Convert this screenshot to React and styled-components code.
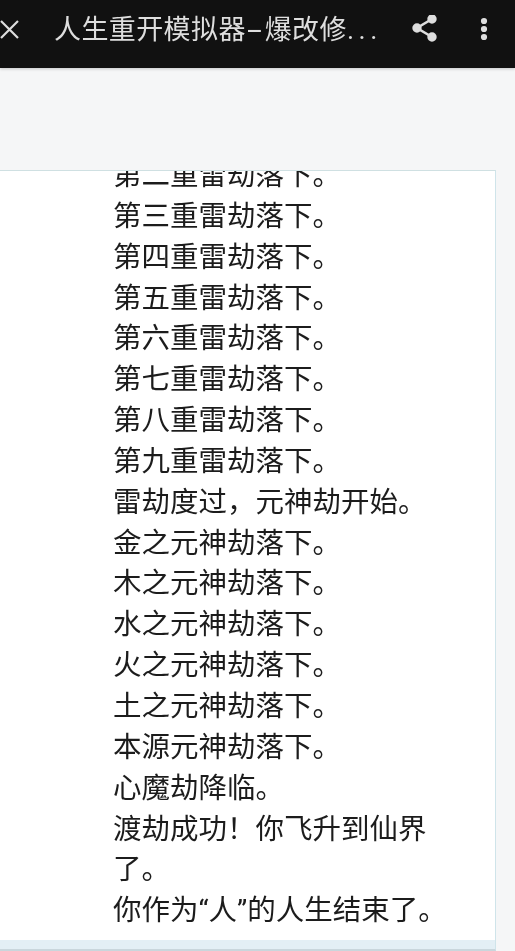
import React from "react";
import styled, { createGlobalStyle } from "styled-components";

const GlobalStyle = createGlobalStyle`
  html, body {
    margin: 0;
    padding: 0;
    height: 100%;
    overflow: hidden;
    background-color: #f5f6f7;
  }
`;

const Page = styled.div`
  width: 515px;
  height: 951px;
  display: flex;
  flex-direction: column;
  overflow: hidden;
  font-family: Roboto, "Noto Sans CJK SC", sans-serif;
  filter: blur(0.35px);
`;

const Toolbar = styled.div`
  height: 68px;
  box-sizing: border-box;
  flex-shrink: 0;
  display: flex;
  align-items: center;
  padding-bottom: 8px;
  background-color: #111111;
  box-shadow: 0 1px 3px rgba(0, 0, 0, 0.2);
  color: #dedede;
`;

const CloseIcon = styled.svg`
  width: 20px;
  height: 20px;
  flex-shrink: 0;
  stroke: #dedede;
  stroke-width: 2.2;
  fill: none;
`;

const Title = styled.div`
  flex: 1;
  margin-left: 34px;
  font-size: 27px;
  line-height: 40px;
  letter-spacing: 0.4px;
  white-space: nowrap;
`;

const Dash = styled.span`
  display: inline-block;
  margin: 0 5.5px;
  transform: scaleX(2);
`;

const Dots = styled.span`
  letter-spacing: 4.6px;
`;

const ToolbarIcon = styled.svg`
  width: ${(props) => props.$width}px;
  height: 30px;
  flex-shrink: 0;
  margin-right: ${(props) => props.$gap}px;
  fill: #dedede;
  stroke: #dedede;
  stroke-width: 2.6;
`;

const Content = styled.div`
  flex: 1;
  padding: 102px 19px 0 0;
  min-height: 0;
`;

const Card = styled.div`
  height: 770px;
  box-sizing: border-box;
  padding-left: 113px;
  background-color: #ffffff;
  border-top: 1px solid #cfe0e2;
  border-right: 1px solid #cfe4ea;
  overflow: hidden;
`;

const Lines = styled.div`
  margin-top: -15px;
  color: #1c1c1c;
  font-size: 28.5px;
  line-height: 40.85px;
  width: 350px;
`;

const Footer = styled.div`
  height: 11px;
  box-sizing: border-box;
  background-color: #e3eff5;
  border-right: 1px solid #cfe4ea;
  border-bottom: 2px solid #c9d6dc;
  margin-right: 19px;
  flex-shrink: 0;
`;

const LINES = [
  "第二重雷劫落下。",
  "第三重雷劫落下。",
  "第四重雷劫落下。",
  "第五重雷劫落下。",
  "第六重雷劫落下。",
  "第七重雷劫落下。",
  "第八重雷劫落下。",
  "第九重雷劫落下。",
  "雷劫度过，元神劫开始。",
  "金之元神劫落下。",
  "木之元神劫落下。",
  "水之元神劫落下。",
  "火之元神劫落下。",
  "土之元神劫落下。",
  "本源元神劫落下。",
  "心魔劫降临。",
  "渡劫成功！你飞升到仙界了。",
  "你作为“人”的人生结束了。",
];

const App = () => {
  return (
    <Page>
      <GlobalStyle />
      <Toolbar>
        <CloseIcon viewBox="0 0 20 20">
          <path d="M1 1 L18 18 M18 1 L1 18" />
        </CloseIcon>
        <Title>
          人生重开模拟器<Dash>-</Dash>爆改修<Dots>...</Dots>
        </Title>
        <ToolbarIcon $width={26} $gap={41} viewBox="0 0 26 30">
          <path d="M20 4 L5 13 L20 22" fill="none" />
          <circle cx="20" cy="4" r="3.4" />
          <circle cx="5" cy="13" r="3.4" />
          <circle cx="20" cy="22" r="3.4" />
        </ToolbarIcon>
        <ToolbarIcon $width={10} $gap={26} viewBox="0 0 10 30">
          <circle cx="5" cy="6" r="1.8" />
          <circle cx="5" cy="14" r="1.8" />
          <circle cx="5" cy="22" r="1.8" />
        </ToolbarIcon>
      </Toolbar>
      <Content>
        <Card>
          <Lines>
            {LINES.map((line) => (
              <div key={line}>{line}</div>
            ))}
          </Lines>
        </Card>
      </Content>
      <Footer />
    </Page>
  );
};

export default App;
